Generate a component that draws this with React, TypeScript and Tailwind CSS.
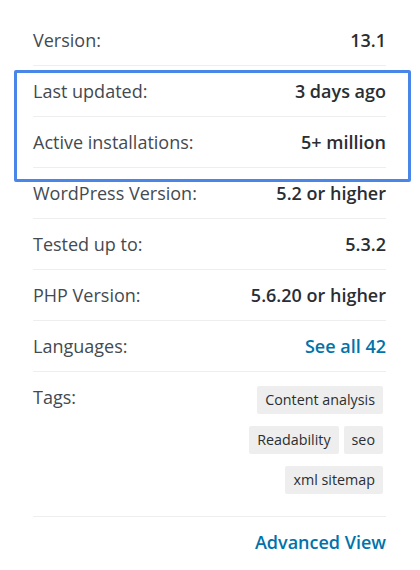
import React from "react";

const rows: { label: string; value: string; link?: boolean }[] = [
  { label: "Version:", value: "13.1" },
  { label: "Last updated:", value: "3 days ago" },
  { label: "Active installations:", value: "5+ million" },
  { label: "WordPress Version:", value: "5.2 or higher" },
  { label: "Tested up to:", value: "5.3.2" },
  { label: "PHP Version:", value: "5.6.20 or higher" },
  { label: "Languages:", value: "See all 42", link: true },
];

const tags = ["Content analysis", "Readability", "seo", "xml sitemap"];

export default function App() {
  return (
    <div
      className="relative w-[420px] h-[570px] bg-white pl-[33px] pr-[34px] pt-[15px] text-[18px] text-[#444a50]"
      style={{ fontFamily: '"Open Sans", "Liberation Sans", sans-serif' }}
    >
      {rows.map((r) => (
        <div
          key={r.label}
          className="flex items-center justify-between border-b border-[#eeeeee] py-[13px] leading-[24px]"
        >
          <span>{r.label}</span>
          <span
            className={
              r.link
                ? "font-semibold text-[#0073aa]"
                : "font-semibold text-[#2a2e33]"
            }
          >
            {r.value}
          </span>
        </div>
      ))}
      <div className="flex justify-between border-b border-[#eeeeee] pt-[13px] pb-[22px]">
        <span className="leading-[24px]">Tags:</span>
        <div className="flex w-[150px] flex-wrap justify-end gap-x-[5px] gap-y-[12px] pt-[1px] pr-[3px]">
          {tags.map((t) => (
            <span
              key={t}
              className="rounded-[2px] bg-[#eeeeee] px-2 text-[14.3px] leading-[28px] text-[#2a2e33]"
            >
              {t}
            </span>
          ))}
        </div>
      </div>
      <div className="flex justify-end py-[13px] leading-[24px]">
        <span className="text-[18px] font-semibold text-[#0073aa]">Advanced View</span>
      </div>
      <div className="pointer-events-none absolute left-[14px] top-[70px] h-[112px] w-[397px] rounded-[2px] border-[3px] border-[#4a86e8]" />
    </div>
  );
}
